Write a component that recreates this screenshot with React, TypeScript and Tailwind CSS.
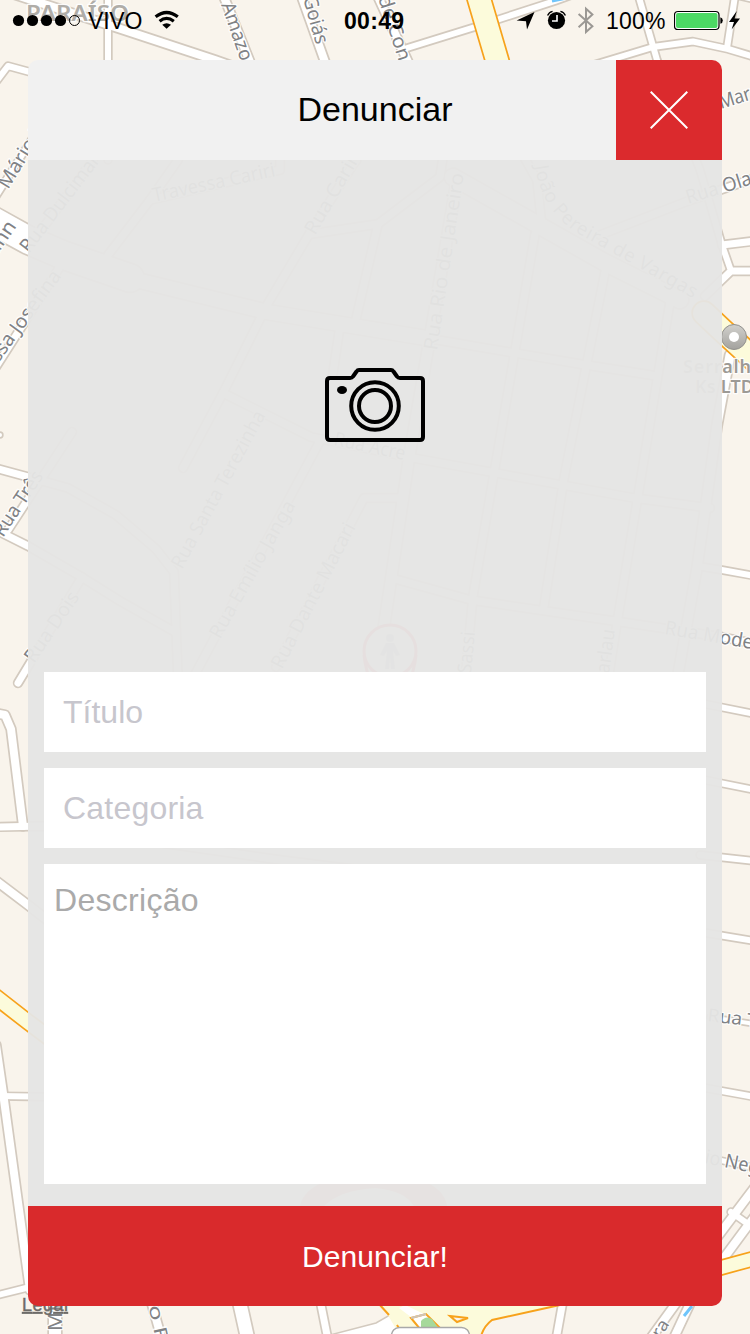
import React from "react";

type Pt = [number, number];
type Road = { w: number; pts: Pt[] };

const roads: Road[] = [
  { w: 6, pts: [[108, -5], [108, 160]] },
  { w: 8, pts: [[10, -7], [121, 29], [215, 60], [300, 90]] },
  { w: 8, pts: [[222, -8], [250, 62]] },
  { w: 8, pts: [[300, -8], [325, 62], [356, 160]] },
  { w: 8, pts: [[374, -12], [408, 62], [444, 150]] },
  { w: 6, pts: [[404, 49], [475, 27], [555, 1], [580, -8]] },
  { w: 6, pts: [[638, -6], [657, 60], [700, 170], [722, 245], [730, 268]] },
  { w: 6, pts: [[590, 66], [653, 47], [693, 41.5], [728, 49], [755, 57]] },
  { w: 6, pts: [[735, -4], [727, 48]] },
  { w: 3, pts: [[738, -3], [755, 1]] },
  { w: 6, pts: [[-5, 83], [8, 66], [30, 72], [108, 95]] },
  { w: 6, pts: [[-4, 196], [34, 136]] },
  { w: 27, pts: [[-10, 219], [28, 240], [63, 255], [130, 278]] },
  { w: 14, pts: [[120, 276], [267, 312], [426, 338]] },
  { w: 7, pts: [[426, 338], [586, 365], [657, 376]] },
  { w: 7, pts: [[40, 232], [93, 160]] },
  { w: 7, pts: [[-6, 370], [63, 262]] },
  { w: 7, pts: [[108, 255], [150, 200], [178, 160]] },
  { w: 7, pts: [[150, 200], [280, 170], [280, 150]] },
  { w: 7, pts: [[183, 468], [223, 393], [267, 305], [311, 231], [356, 160]] },
  { w: 7, pts: [[311, 234], [378, 224], [440, 177], [444, 150]] },
  { w: 7, pts: [[378, 224], [356, 319]] },
  { w: 7, pts: [[340, 326], [333, 373]] },
  { w: 10, pts: [[457, 180], [426, 360], [409, 458], [382, 640]] },
  { w: 16, pts: [[453, 177], [542, 227], [604, 262], [680, 300]] },
  { w: 7, pts: [[520, 150], [537, 180], [542, 227]] },
  { w: 7, pts: [[535, 234], [473, 596], [465, 680]] },
  { w: 7, pts: [[606, 267], [564, 478], [544, 606]] },
  { w: 7, pts: [[670, 302], [617, 623], [608, 680]] },
  { w: 9, pts: [[730, 355], [717, 425], [697, 568], [677, 680]] },
  { w: 7, pts: [[223, 393], [311, 437], [413, 458], [634, 498], [710, 508]] },
  { w: 7, pts: [[395, 579], [471, 600], [621, 622], [722, 637], [755, 644]] },
  { w: 7, pts: [[400, 498], [364, 498], [276, 667]] },
  { w: 7, pts: [[320, 441], [192, 680]] },
  { w: 7, pts: [[600, 235], [688, 201], [755, 178]] },
  { w: 7, pts: [[722, 245], [755, 241]] },
  { w: 7, pts: [[755, 271], [731, 271], [705, 296]] },
  { w: 6, pts: [[697, 566], [722, 570], [755, 576]] },
  { w: 7, pts: [[-5, 468], [28, 477], [68, 488], [116, 515], [156, 549], [174, 572], [178, 680]] },
  { w: 7, pts: [[-6, 529], [28, 546], [80, 576], [120, 601], [175, 632]] },
  { w: 7, pts: [[8, 530], [72, 432]] },
  { w: 7, pts: [[18, 683], [82, 577]] },
  { w: 4, pts: [[-6, 435], [0, 435]] },
  { w: 7, pts: [[-6, 827], [43, 826], [280, 860], [480, 885]] },
  { w: 8, pts: [[-6, 713], [5, 715], [11, 729], [23, 826]] },
  { w: 8, pts: [[-5, 880], [28, 905], [60, 930]] },
  { w: 6, pts: [[-6, 1096], [60, 1097]] },
  { w: 8, pts: [[-4, 1045], [4, 1100], [30, 1290]] },
  { w: 6, pts: [[-6, 1296], [34, 1286]] },
  { w: 6, pts: [[700, 703], [755, 714]] },
  { w: 6, pts: [[700, 779], [755, 790]] },
  { w: 6, pts: [[700, 855], [755, 861]] },
  { w: 6, pts: [[700, 932], [755, 941]] },
  { w: 4, pts: [[710, 1017], [755, 1024]] },
  { w: 6, pts: [[700, 1087], [755, 1097]] },
  { w: 5, pts: [[710, 1158], [755, 1168]] },
  { w: 8, pts: [[712, 1244], [755, 1187]] },
  { w: 8, pts: [[718, 1266], [755, 1216]] },
  { w: 6, pts: [[731, 1212], [748, 1224]] },
  { w: 12, pts: [[55, 1240], [55, 1340]] },
  { w: 8, pts: [[148, 1290], [162, 1340]] },
  { w: 13, pts: [[238, 1295], [248, 1340]] },
  { w: 7, pts: [[319, 1295], [328, 1340]] },
  { w: 7, pts: [[564, 1295], [556, 1340]] },
  { w: 8, pts: [[682, 1295], [648, 1342]] },
  { w: 8, pts: [[694, 1295], [672, 1342]] },
];

const highways: Road[] = [
  { w: 22, pts: [[477, -8], [497, 60], [505, 90]] },
  { w: 22, pts: [[704, 313], [722, 330], [756, 361]] },
  { w: 14, pts: [[-8, 994], [28, 1022], [60, 1046]] },
  { w: 13, pts: [[716, 1269], [756, 1258]] },
];

type Label = { t: string; a: Pt; b: Pt; s?: number };

const labels: Label[] = [
  { t: "a Amazo", a: [216, -10], b: [241, 62] },
  { t: "Goiás", a: [303, -2], b: [316, 45] },
  { t: "de Con", a: [378, -2], b: [399, 62] },
  { t: "Mário R", a: [8, 190], b: [46, 128] },
  { t: "ann", a: [-4, 257], b: [17, 226] },
  { t: "Rua Dulcimar", a: [29, 254], b: [101, 160] },
  { t: "essa Josefina", a: [-8, 372], b: [62, 276] },
  { t: "Rua Três", a: [3, 538], b: [44, 476] },
  { t: "Rua Dois", a: [34, 664], b: [80, 597] },
  { t: "Travessa Cariri", a: [154, 202], b: [276, 176] },
  { t: "Rua Cariri", a: [315, 236], b: [362, 155] },
  { t: "Rua Rio de Janeiro", a: [437, 351], b: [464, 174] },
  { t: "Rua Acre", a: [333, 445], b: [404, 460] },
  { t: "Rua Santa Terezinha", a: [182, 570], b: [266, 415] },
  { t: "Rua Emílio Janga", a: [220, 640], b: [296, 505] },
  { t: "Rua Dante Macari", a: [282, 670], b: [356, 527] },
  { t: "Sassi", a: [471, 674], b: [475, 632] },
  { t: "arlau", a: [609, 674], b: [615, 630] },
  { t: "Marz", a: [721, 109], b: [760, 97] },
  { t: "Rua Ola", a: [688, 204], b: [753, 184] },
  { t: "Rua Mode", a: [664, 634], b: [752, 649] },
  { t: "Rua T", a: [707, 1021], b: [757, 1027], s: 18 },
  { t: "io Neg", a: [704, 1163], b: [758, 1174] },
  { t: "MI", a: [62, 1331], b: [62, 1305] },
  { t: "io F", a: [147, 1300], b: [156, 1341], s: 18 },
  { t: "ra", a: [660, 1339], b: [670, 1324], s: 17 },
];

const toPath = (pts: Pt[]) => "M" + pts.map((p) => p.join(" ")).join("L");

function Roads({ items, casing, fill }: { items: Road[]; casing: string; fill: string }) {
  return (
    <g fill="none" strokeLinecap="round" strokeLinejoin="round">
      {items.map((r, i) => (
        <path key={"c" + i} d={toPath(r.pts)} stroke={casing} strokeWidth={r.w + 3.4} />
      ))}
      {items.map((r, i) => (
        <path key={"f" + i} d={toPath(r.pts)} stroke={fill} strokeWidth={r.w} />
      ))}
    </g>
  );
}

function StreetLabel({ t, a, b, s = 19.5 }: Label) {
  const dx = b[0] - a[0];
  const dy = b[1] - a[1];
  const deg = (Math.atan2(dy, dx) * 180) / Math.PI;
  return (
    <text
      transform={`translate(${a[0]} ${a[1]}) rotate(${deg})`}
      fontSize={s}
      textLength={Math.hypot(dx, dy)}
      lengthAdjust="spacingAndGlyphs"
    >
      {t}
    </text>
  );
}

function MapBackdrop() {
  return (
    <svg className="absolute inset-0 h-full w-full" viewBox="0 0 750 1334" aria-hidden="true">
      <defs>
        <linearGradient id="poi" x1="0" y1="0" x2="0" y2="1">
          <stop offset="0" stopColor="#d2d1cd" />
          <stop offset="1" stopColor="#a3a29e" />
        </linearGradient>
      </defs>
      <rect width="750" height="1334" fill="#f9f4ec" />
      <Roads items={roads} casing="#d3cabf" fill="#ffffff" />
      <path d="M330 1335L376 1323L395 1312L402 1335Z" fill="#fff" stroke="#d3cabf" strokeWidth="1.5" />
      <Roads items={highways} casing="#f7a21b" fill="#fcfbdb" />
      <g strokeWidth="2" stroke="#f7a21b">
        <path d="M379 1300L399 1334H481Q483 1326 492 1320L557 1306V1300Z" fill="#fcfbdb" stroke="none" />
        <path d="M379 1304L389 1315M397 1325L400 1330M560 1305L492 1320Q484 1326 481 1336" fill="none" />
        <path d="M399 1308L405 1305L424 1314L411 1317Z" fill="#fff" stroke="none" />
        <path d="M411 1318L426 1314L441 1329H420Z" fill="#fff" />
        <path d="M411 1318L426 1314" stroke="#cfc5b8" />
        <path d="M421 1321Q426 1315 432 1319L439 1329H421Z" fill="#a6d99b" stroke="none" />
        <path d="M450 1316L468 1318L457 1322Z" fill="#f9f4ec" />
      </g>
      <path d="M552 1L567 -2M692 1306L684 1316" stroke="#6fc5fb" strokeWidth="3" />
      <rect x="391.5" y="1327.5" width="78" height="20" rx="8" fill="#fff" stroke="#a9a9a9" strokeWidth="1.5" />

      <g
        fontFamily="'Noto Sans', 'Open Sans', sans-serif"
        fill="#808285"
        stroke="#ffffff"
        strokeOpacity="0.9"
        strokeWidth="2.5"
        strokeLinejoin="round"
        paintOrder="stroke"
      >
        {labels.map((l) => (
          <StreetLabel key={l.t} {...l} />
        ))}
        <path id="vargas" d="M535 166Q541 208 575 232Q640 268 706 306" fill="none" stroke="none" />
        <text fontSize="19" letterSpacing="0.7">
          <textPath href="#vargas">João Pereira de Vargas</textPath>
        </text>
        <g fontWeight="600" fill="#9d9a95" fontSize="18">
          <text x="683" y="373" textLength="68">Serralh</text>
          <text x="695" y="393" textLength="59">Ks LTD</text>
        </g>
        <text x="26" y="21" fontSize="21" fontWeight="600" fill="#b0ada8" textLength="103" lengthAdjust="spacingAndGlyphs">
          PARAÍSO
        </text>
      </g>

      <circle cx="734" cy="337" r="12.5" fill="url(#poi)" stroke="#92918e" />
      <circle cx="734" cy="337" r="5" fill="#fff" />

      <g fill="none" stroke="#ef5a60" strokeWidth="3">
        <circle cx="390" cy="651" r="26" fill="#f5efee" />
        <path d="M364 655Q368 690 390 710Q412 690 416 655" />
      </g>
      <g fill="#b5b8bd">
        <circle cx="390" cy="638" r="4" />
        <path d="M386 643H394L400 655L396 656L393 651L395 669H391L390 658L389 669H385L387 651L384 656L380 655Z" />
      </g>
      <path d="M300 1206Q304 1188 330 1180H420Q444 1188 447 1206L447 1230H300Z" fill="#ec8f92" />
      <path d="M324 1206Q340 1190 375 1188Q404 1190 414 1206Z" fill="#f9f4ec" />

      <text
        x="22"
        y="1311"
        fontFamily="'Liberation Sans', Arial, sans-serif"
        fontSize="18"
        fill="#6d6b68"
        stroke="#6d6b68"
        strokeWidth="0.4"
        textDecoration="underline"
        textLength="46"
      >
        Legal
      </text>
    </svg>
  );
}

function StatusBar() {
  return (
    <header className="relative flex h-10 items-center text-[23px] leading-10 text-black">
      <svg className="ml-3 h-10 w-[70px] shrink-0" viewBox="12 0 70 40">
        {[18.5, 32.5, 46.5, 60.5].map((x) => (
          <circle key={x} cx={x} cy="20.5" r="5.6" />
        ))}
        <circle cx="74.5" cy="20.5" r="5" fill="none" stroke="#000" strokeWidth="1" />
      </svg>
      <span className="ml-[6px] w-[54px] pt-[2px] tracking-[-0.2px]">VIVO</span>
      <svg className="ml-[12px] h-10 w-[26px] shrink-0" viewBox="154 0 26 40" fill="none" stroke="#000">
        <path d="M155.6 16.8Q166.6 8.2 177.8 16.8" strokeWidth="3.2" />
        <path d="M159.6 21.2Q166.6 15.6 173.8 21.2" strokeWidth="3.2" />
        <path d="M162.2 24.8Q166.6 21.6 171 24.8L166.6 28.8Z" fill="#000" stroke="none" />
      </svg>
      <span className="ml-[164px] w-[62px] pt-[2px] font-bold tracking-[0.3px]">00:49</span>
      <svg className="ml-[110px] h-10 w-[80px] shrink-0" viewBox="516 0 80 40">
        <path d="M534.5 12L527 29.5L526 21.2L516.6 20.4Z" />
        <circle cx="556.5" cy="20.5" r="8.6" />
        <path d="M557 15V21H552" fill="none" stroke="#fff" strokeWidth="1.6" />
        <path
          d="M547.6 15.6Q549 12.2 552.6 11.4M565.4 15.6Q564 12.2 560.4 11.4"
          fill="none"
          stroke="#000"
          strokeWidth="1.4"
        />
        <path d="M578.6 14L592.4 26.2L586 32V8.8L592.4 14.6L578.6 27.2" fill="none" stroke="#9b9894" strokeWidth="2" />
      </svg>
      <span className="ml-[10px] w-[60px] pt-[2px] tracking-[0.2px]">100%</span>
      <svg className="ml-[8px] h-10 w-[67px] shrink-0" viewBox="674 0 67 40">
        <rect x="674.5" y="11.5" width="44.5" height="18" rx="3.5" fill="#fff" stroke="#000" strokeWidth="1.2" />
        <rect x="676" y="13" width="41.5" height="15" rx="2" fill="#4cd964" />
        <path d="M720.4 17.2Q722.8 18 722.8 20.5Q722.8 23 720.4 23.8Z" />
        <path d="M736.8 11L729 22H734L731.6 29.6L740 18.4H734.6Z" />
      </svg>
    </header>
  );
}

function CameraIcon() {
  return (
    <svg className="h-[74px] w-[100px]" viewBox="325 368 100 74" fill="none" stroke="#000" strokeWidth="4">
      <path
        d="M330 378H350Q352 378 353 376.5L356.5 371.5Q357.5 370 359 370H391Q392.5 370 393.5 371.5L397 376.5Q398 378 400 378H420Q423 378 423 381V437Q423 440 420 440H330Q327 440 327 437V381Q327 378 330 378Z"
        strokeLinejoin="round"
      />
      <circle cx="375" cy="406" r="23.8" />
      <circle cx="375" cy="406" r="16" />
      <ellipse cx="342" cy="390" rx="5" ry="4" fill="#000" stroke="none" />
    </svg>
  );
}

export default function App() {
  return (
    <div className="relative flex h-[1334px] w-[750px] flex-col overflow-hidden font-['Liberation_Sans',Arial,sans-serif]">
      <MapBackdrop />
      <StatusBar />
      <main className="relative mx-7 mt-5 flex h-[1246px] flex-col overflow-hidden rounded-[10px]">
        <div className="grid h-[100px] shrink-0 grid-cols-[1fr_106px] bg-[#f1f1f1]">
          <h1 className="pl-[106px] text-center text-[34px] leading-[98px] text-black">Denunciar</h1>
          <button className="flex items-center justify-center bg-[#db2a2d]" aria-label="Fechar">
            <svg className="h-[38px] w-[38px]" viewBox="0 0 38 38" stroke="#fff" strokeWidth="2">
              <path d="M.7.7L37.3 37.3M37.3.7L.7 37.3" />
            </svg>
          </button>
        </div>
        <div className="flex grow flex-col bg-[#e5e5e4]/96 px-4">
          <div className="flex h-[512px] items-center justify-center pb-[22px]">
            <CameraIcon />
          </div>
          <div className="flex flex-col gap-4 text-[32px]">
            <div className="h-20 bg-white pl-[19px] leading-20 text-[#c7c6cd]">Título</div>
            <div className="h-20 bg-white pl-[19px] leading-20 tracking-[0.2px] text-[#c7c6cd]">Categoria</div>
            <div className="h-80 bg-white pt-[18px] pl-[10px] leading-9 tracking-[0.3px] text-[#aaaaaa]">Descrição</div>
          </div>
        </div>
        <button className="h-[100px] shrink-0 bg-[#d92a2c] text-[30px] leading-[102px] tracking-[0.1px] text-white">
          Denunciar!
        </button>
      </main>
    </div>
  );
}
